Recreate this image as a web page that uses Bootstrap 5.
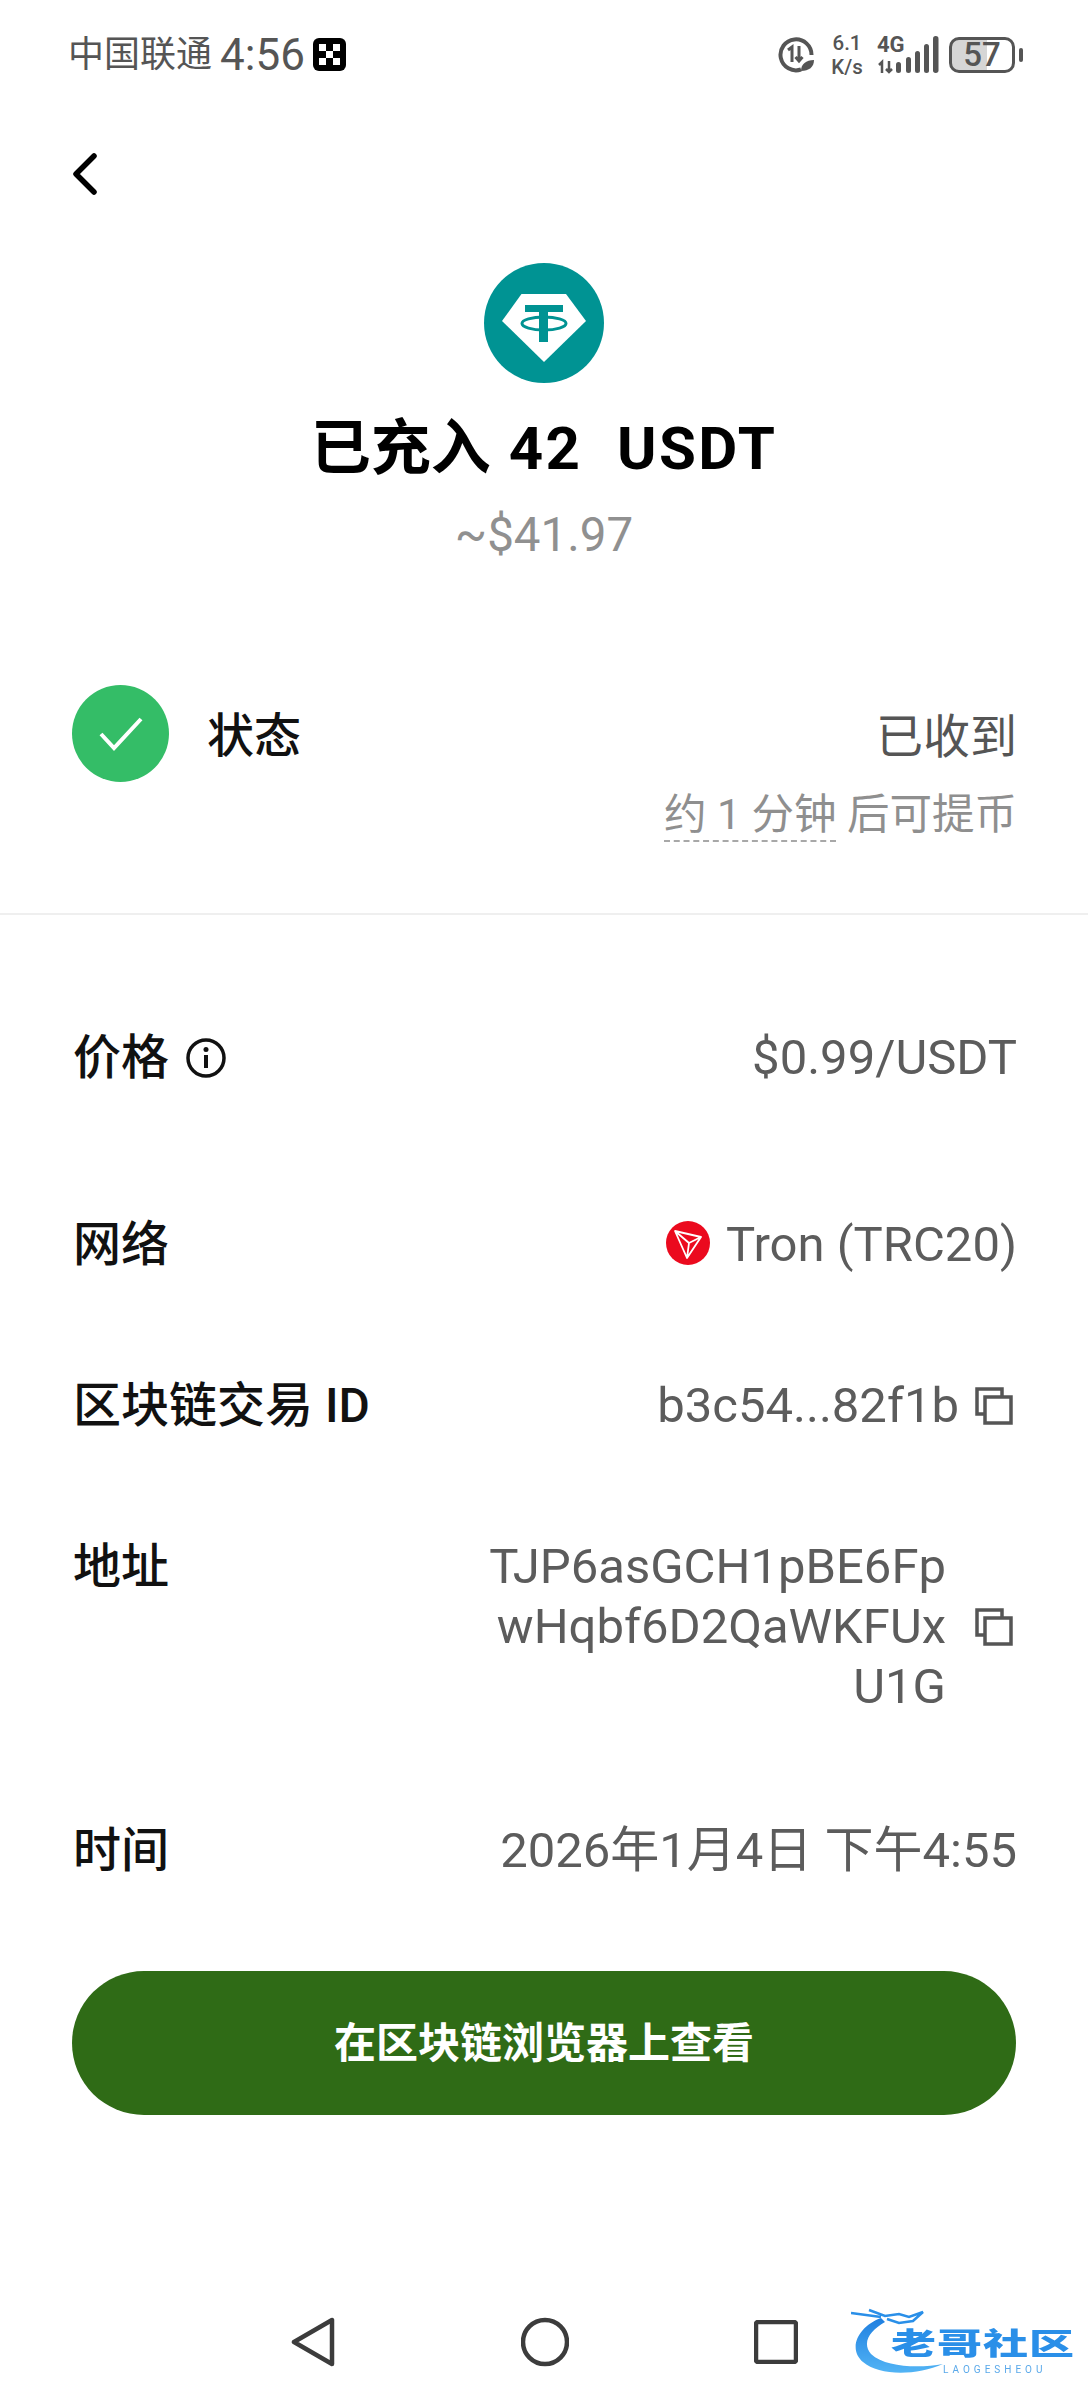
<!DOCTYPE html>
<html lang="zh">
<head>
  <meta charset="UTF-8">
  <title>已充入</title>
  <link rel="stylesheet" href="https://cdn.jsdelivr.net/npm/bootstrap@5.3.3/dist/css/bootstrap.min.css">
  <style>
    body { background: #fff; font-family: Roboto, "Noto Sans CJK SC", sans-serif; color: #111; }
    .screen { width: 1088px; height: 2400px; overflow: hidden; }
    .status-bar { height: 104px; padding: 5px 65px 0 68px; color: #555; }
    .carrier { font-size: 36px; line-height: 42px; }
    .clock { font-size: 44px; line-height: 42px; margin-left: 8px; }
    .speed { width: 36px; margin: 0 12px 0 15px; font-size: 20.500px; font-weight: 500; text-align: center; }
    .speed-line { height: 24px; line-height: 24px; white-space: nowrap; }
    .net-wrap { width: 62px; height: 38px; margin-right: 10px; position: relative; }
    .net-type { position: absolute; left: 0; top: -3px; font-size: 22px; line-height: 24px; font-weight: 700; }
    .batt { width: 66px; height: 36px; border: 3px solid #555; border-radius: 10px; font-size: 33px; line-height: 30px; font-weight: 500; text-align: center; background: linear-gradient(90deg, #d6d6d6 58%, #fff 58%); }
    .batt-nub { width: 4px; height: 14px; background: #555; border-radius: 2px; margin-left: 4px; }
    .back-row { height: 159px; padding: 49px 0 0 72px; }
    .title-line { font-size: 60px; line-height: 70px; font-weight: 700; color: #000; margin-top: 31px; white-space: pre; }
    .title-latin { letter-spacing: 2.400px; margin-left: 3px; }
    .fiat-line { font-size: 47.500px; line-height: 60px; color: #909090; margin-top: 21px; }
    .status-block { margin-top: 120px; padding: 0 71px 0 72px; height: 230px; border-bottom: 2px solid #efefef; }
    .check-dot { width: 97px; height: 97px; background: #34bd67; }
    .status-label { font-size: 47px; line-height: 60px; margin: 21px 0 0 38px; font-weight: 500; }
    .status-value { font-size: 47px; line-height: 60px; color: #555; margin-top: 22px; }
    .status-sub { font-size: 42.500px; line-height: 52px; color: #8f8f8f; margin-top: 22px; }
    .dash-under { border-bottom: 2px dashed #a8a8a8; display: inline-block; height: 53px; }
    .info-list { padding: 0 71px 0 73px; margin-top: 113px; }
    .info-row { font-size: 48px; line-height: 60px; font-weight: 500; }
    .info-row + .info-row { margin-top: 101px; }
    .info-row.tall-gap { margin-top: 127px; }
    .info-row.last-gap { margin-top: 104px; }
    .info-value { color: #5c5c5c; font-size: 49px; font-weight: 400; }
    .addr-value { line-height: 60px; text-align: right; width: 480px; }
    .copy-icon { margin: 0 4px 0 16px; }
    .addr-copy { margin-left: 29px; }
    .view-btn { margin: 90px 72px 0; height: 144px; border-radius: 72px; background: #2f6b16; border: 0; color: #fff; font-size: 42px; font-weight: 700; width: 944px; }
    .view-btn:hover { background: #2f6b16; color: #fff; }
    .nav-bar { margin-top: 192px; height: 70px; padding-left: 291px; }
    .nav-circle { margin-left: 186px; }
    .nav-square { margin-left: 185px; }
    .brand { width: 222px; height: 68px; margin-left: 53px; position: relative; filter: blur(.5px); }
    .brand-name { position: absolute; left: 40px; top: 17px; height: 38px; font-size: 45px; line-height: 38px; font-weight: 900; letter-spacing: 1px; color: #2a8fe8; white-space: nowrap; transform: scaleY(.66); }
    .brand-sub { position: absolute; left: 92px; top: 55px; height: 13px; font-size: 10px; line-height: 13px; letter-spacing: 4px; color: #5aa9ea; white-space: nowrap; }
  </style>
</head>
<body class="m-0">
  <div class="screen d-flex flex-column">

    <div class="status-bar d-flex align-items-center justify-content-between">
      <div class="d-flex align-items-center">
        <span class="carrier">中国联通</span>
        <span class="clock">4:56</span>
        <svg class="ms-2" width="33" height="33" viewBox="0 0 33 33">
          <rect width="33" height="33" rx="6" fill="#000"/>
          <g fill="#fff">
            <rect x="6" y="6" width="7" height="7"/><rect x="20" y="6" width="7" height="7"/>
            <rect x="13" y="13" width="7" height="7"/>
            <rect x="6" y="20" width="7" height="7"/><rect x="20" y="20" width="7" height="7"/>
          </g>
        </svg>
      </div>
      <div class="d-flex align-items-center">
        <svg width="36" height="36" viewBox="0 0 36 36">
          <path d="M23 32.500A15.500 15.500 0 1 1 33.500 18" fill="none" stroke="#555" stroke-width="4"/>
          <path d="M10 13l4-3v15M21 9v15m-3.500-4l3.500 4 3.500-4" fill="none" stroke="#555" stroke-width="3"/>
          <path d="M23 34c0-7 5-11 13-11 0 7-5 11-13 11z" fill="#555"/>
        </svg>
        <div class="speed">
          <div class="speed-line">6.1</div>
          <div class="speed-line">K/s</div>
        </div>
        <div class="net-wrap">
          <span class="net-type">4G</span>
          <svg class="d-block" width="62" height="38" viewBox="0 0 62 38">
            <path d="M5 37V26l-3 3M12 25v11m-3-3l3 3 3-3" fill="none" stroke="#555" stroke-width="2.500"/>
            <g fill="#555">
              <rect x="19" y="26" width="5" height="11" rx="2.500"/><rect x="29" y="21" width="5" height="16" rx="2.500"/>
              <rect x="38" y="15" width="5" height="22" rx="2.500"/><rect x="47" y="8" width="5" height="29" rx="2.500"/>
              <rect x="56" y="0" width="5.500" height="37" rx="2.700"/>
            </g>
          </svg>
        </div>
        <div class="batt">57</div>
        <div class="batt-nub"></div>
      </div>
    </div>

    <div class="back-row">
      <svg class="d-block" width="26" height="42" viewBox="0 0 26 42">
        <path d="M22 3L4 21l18 18" fill="none" stroke="#000" stroke-width="5.500" stroke-linecap="round" stroke-linejoin="round"/>
      </svg>
    </div>

    <div class="d-flex flex-column align-items-center">
      <svg width="120" height="120" viewBox="0 0 120 120">
        <circle cx="60" cy="60" r="60" fill="#009393"/>
        <path d="M37.500 31H82L102 58 60 99 18 58z" fill="#fff"/>
        <path d="M41 42h38v7H64v30h-9V49H41z" fill="#009393"/>
        <ellipse cx="60" cy="60.500" rx="22" ry="6.500" fill="none" stroke="#009393" stroke-width="3"/>
      </svg>
      <div class="title-line">已充入 <span class="title-latin">42  USDT</span></div>
      <div class="fiat-line">~$41.97</div>
    </div>

    <div class="status-block d-flex justify-content-between">
      <div class="d-flex align-items-start">
        <div class="check-dot rounded-circle d-flex align-items-center justify-content-center">
          <svg width="44" height="34" viewBox="0 0 44 34">
            <path d="M2 17l13 14L42 2" fill="none" stroke="#fff" stroke-width="4"/>
          </svg>
        </div>
        <div class="status-label">状态</div>
      </div>
      <div class="text-end">
        <div class="status-value">已收到</div>
        <div class="status-sub"><span class="dash-under">约 1 分钟</span> 后可提币</div>
      </div>
    </div>

    <div class="info-list">
      <div class="info-row d-flex justify-content-between align-items-center">
        <div class="d-flex align-items-center">
          <span>价格</span>
          <svg class="ms-3" width="42" height="42" viewBox="0 0 42 42">
            <circle cx="21" cy="21" r="18" fill="none" stroke="#111" stroke-width="3.500"/>
            <path d="M21 18v13" stroke="#111" stroke-width="4"/>
            <circle cx="21" cy="12.500" r="2.500" fill="#111"/>
          </svg>
        </div>
        <span class="info-value">$0.99/USDT</span>
      </div>

      <div class="info-row tall-gap d-flex justify-content-between align-items-center">
        <span>网络</span>
        <div class="d-flex align-items-center info-value">
          <svg class="me-3 mb-1" width="44" height="44" viewBox="0 0 44 44">
            <circle cx="22" cy="22" r="22" fill="#eb0a1e"/>
            <path d="M9 10l26 6-14 21zM9 10l14 12 12-6M23 22l-2 15" fill="none" stroke="#fff" stroke-width="1.800" stroke-linejoin="round"/>
          </svg>
          <span>Tron (TRC20)</span>
        </div>
      </div>

      <div class="info-row d-flex justify-content-between align-items-center">
        <span>区块链交易 ID</span>
        <div class="d-flex align-items-center info-value">
          <span>b3c54...82f1b</span>
          <svg class="copy-icon" width="38" height="38" viewBox="0 0 38 38">
            <path d="M9 27H2V2h25v7" fill="none" stroke="#555" stroke-width="3.500"/>
            <rect x="10" y="10" width="26" height="26" fill="none" stroke="#555" stroke-width="3.500"/>
          </svg>
        </div>
      </div>

      <div class="info-row d-flex justify-content-between align-items-start">
        <span>地址</span>
        <div class="d-flex align-items-center info-value">
          <div class="addr-value">TJP6asGCH1pBE6Fp<br>wHqbf6D2QaWKFUx<br>U1G</div>
          <svg class="copy-icon addr-copy" width="38" height="38" viewBox="0 0 38 38">
            <path d="M9 27H2V2h25v7" fill="none" stroke="#555" stroke-width="3.500"/>
            <rect x="10" y="10" width="26" height="26" fill="none" stroke="#555" stroke-width="3.500"/>
          </svg>
        </div>
      </div>

      <div class="info-row last-gap d-flex justify-content-between align-items-center">
        <span>时间</span>
        <span class="info-value">2026年1月4日 下午4:55</span>
      </div>
    </div>

    <button type="button" class="btn view-btn">在区块链浏览器上查看</button>

    <div class="nav-bar d-flex align-items-center">
      <svg width="44" height="50" viewBox="0 0 44 50">
        <path d="M41 3v44L3 25z" fill="none" stroke="#3c3c3c" stroke-width="4.500" stroke-linejoin="round"/>
      </svg>
      <svg class="nav-circle" width="48" height="50" viewBox="0 0 48 50">
        <circle cx="24" cy="25" r="22" fill="none" stroke="#3c3c3c" stroke-width="4.500"/>
      </svg>
      <svg class="nav-square" width="44" height="44" viewBox="0 0 44 44">
        <rect x="2" y="2" width="40" height="40" rx="2" fill="none" stroke="#3c3c3c" stroke-width="4.500"/>
      </svg>
      <div class="brand">
        <svg width="120" height="68" viewBox="0 0 120 68">
          <defs>
            <linearGradient id="dragonFill" x1="0" y1="0" x2="0" y2="1">
              <stop offset="0" stop-color="#1f7fe0"/><stop offset="1" stop-color="#52b4f5"/>
            </linearGradient>
          </defs>
          <path d="M30 10C8 18 -4 40 12 54 28 68 65 68 92 56 70 60 35 60 20 46 10 34 20 22 34 14z" fill="url(#dragonFill)"/>
          <path d="M0 5l30 4M18 2l16 6 14-2 10 3 14-5-10 9-14 2-12-4" fill="none" stroke="#2a8fe8" stroke-width="2.500"/>
        </svg>
        <div class="brand-name">老哥社区</div>
        <div class="brand-sub">LAOGESHEOU</div>
      </div>
    </div>
  </div>

  <script src="https://cdn.jsdelivr.net/npm/bootstrap@5.3.3/dist/js/bootstrap.bundle.min.js"></script>
</body>
</html>
